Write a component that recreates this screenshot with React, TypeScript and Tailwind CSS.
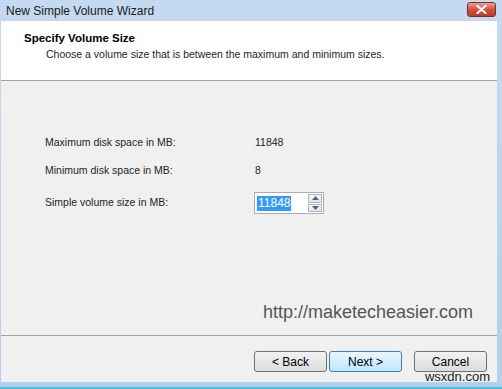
export default function App() {
  const font = { fontFamily: '"Liberation Sans", Arial, sans-serif' };
  return (
    <div
      className="relative w-[502px] h-[389px] flex flex-col bg-gradient-to-b from-[#c5daf0] to-[#b7cfea] border-b-2 border-[#3fc4e8] text-[10.5px] text-[#1e1e1e] overflow-hidden"
      style={font}
    >
      {/* title bar */}
      <div className="h-[21px] flex items-center justify-between pl-[6px] pr-[6px] shrink-0">
        <span className="text-[12px] text-[#1b1b1b]">New Simple Volume Wizard</span>
        <div className="w-[29px] h-[15px] mt-[-2px] rounded-[3px] border border-[#7a2e2a] bg-gradient-to-b from-[#e8a093] via-[#d2503e] to-[#c0392b] flex items-center justify-center">
          <svg width="11" height="9" viewBox="0 0 11 9">
            <path d="M1.5 1 L9.5 8 M9.5 1 L1.5 8" stroke="#fff" strokeWidth="2.2" strokeLinecap="round" />
          </svg>
        </div>
      </div>

      <div className="flex-1 flex flex-col ml-[1px] mr-[5px] mb-[5px] bg-[#f0f0f0]">
        {/* header */}
        <div className="h-[60px] shrink-0 bg-white border-b border-[#a0a0a0] pl-[23px] pt-[10px]">
          <div className="font-bold text-[11.5px] leading-[14px] text-black">Specify Volume Size</div>
          <div className="pl-[22px] mt-[2px] leading-[14px]">Choose a volume size that is between the maximum and minimum sizes.</div>
        </div>

        {/* body */}
        <div className="flex-1 flex flex-col pl-[44px] pt-[55px]">
          <div className="flex items-center h-[14px]">
            <span className="w-[210px]">Maximum disk space in MB:</span>
            <span>11848</span>
          </div>
          <div className="flex items-center h-[14px] mt-[14px]">
            <span className="w-[210px]">Minimum disk space in MB:</span>
            <span>8</span>
          </div>
          <div className="flex items-center mt-[14px]">
            <span className="w-[209px]">Simple volume size in MB:</span>
            <div className="flex h-[22px] border border-[#abadb3] bg-white">
              <div className="w-[53px] flex items-center pl-[2px]">
                <span className="bg-[#3399ff] text-white text-[12px] leading-[15px] px-[1px]">11848</span>
              </div>
              <div className="w-[15px] flex flex-col gap-[1px] p-[1px] pl-0">
                <div className="flex-1 border border-[#a9b8c8] bg-gradient-to-b from-[#f8f8f8] to-[#e4e4e4] flex items-center justify-center">
                  <svg width="7" height="4" viewBox="0 0 7 4"><path d="M0 4 L3.5 0 L7 4 Z" fill="#4d6185" /></svg>
                </div>
                <div className="flex-1 border border-[#a9b8c8] bg-gradient-to-b from-[#f8f8f8] to-[#e4e4e4] flex items-center justify-center">
                  <svg width="7" height="4" viewBox="0 0 7 4"><path d="M0 0 L3.5 4 L7 0 Z" fill="#4d6185" /></svg>
                </div>
              </div>
            </div>
          </div>
          <div className="flex-1" />
          <div className="text-[18px] leading-[22px] text-[#555] pl-[218px] pb-[12px]">http://maketecheasier.com</div>
        </div>

        {/* footer */}
        <div className="h-[47px] shrink-0 border-t border-[#a0a0a0] flex justify-end items-start pt-[15px] pr-[10px]">
          <button className="w-[73px] h-[21px] rounded-[3px] border border-[#707070] bg-gradient-to-b from-[#f2f2f2] to-[#dcdcdc] text-[12px] text-black">
            &lt; Back
          </button>
          <button className="w-[73px] h-[21px] ml-[2px] rounded-[3px] border border-[#3c7fb1] bg-gradient-to-b from-[#eaf6fd] to-[#bee6fd] text-[12px] text-black">
            Next &gt;
          </button>
          <button className="w-[73px] h-[21px] ml-[12px] rounded-[3px] border border-[#707070] bg-gradient-to-b from-[#f2f2f2] to-[#dcdcdc] text-[12px] text-black">
            Cancel
          </button>
        </div>
      </div>
      <span className="absolute right-[12px] bottom-[4px] text-[13px] text-[#222] leading-[13px]">wsxdn.com</span>
    </div>
  );
}
